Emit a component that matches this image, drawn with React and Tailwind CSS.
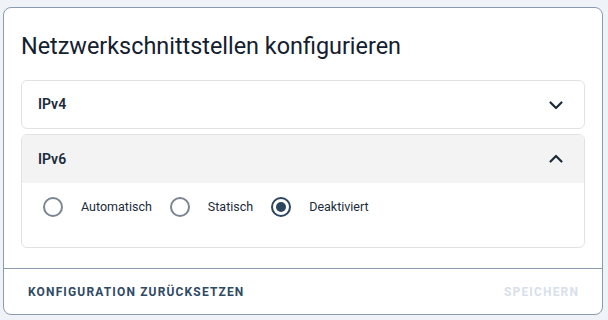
import React from "react";

function Chevron({ up }) {
  return (
    <svg width="24" height="24" viewBox="0 0 24 24" fill="none" stroke="#1c2b3a" strokeWidth="2.2" strokeLinecap="round" strokeLinejoin="round">
      {up ? <path d="M6.5 14.5l5.5-5.5 5.5 5.5" /> : <path d="M6.5 9.5l5.5 5.5 5.5-5.5" />}
    </svg>
  );
}

function Radio({ checked, label }) {
  return (
    <label className="flex items-center">
      <span className={`flex items-center justify-center w-[20px] h-[20px] rounded-full border-2 ${checked ? "border-[#2c4560]" : "border-[#7b8591]"}`}>
        {checked && <span className="w-[10px] h-[10px] rounded-full bg-[#2c4560]" />}
      </span>
      <span className="ml-[18px] text-[12.5px] text-[#1c2b3a]">{label}</span>
    </label>
  );
}

export default function App() {
  return (
    <div className="w-[608px] h-[320px] bg-[#eff2f6] pt-[7px] pl-[3px]" style={{ fontFamily: "Roboto, 'Liberation Sans', sans-serif" }}>
      <div className="w-[600px] h-[308px] bg-white border border-[#8a9bb0] rounded-[8px] flex flex-col">
        <div className="px-[17px] pt-[24px] flex-1">
          <h1 className="text-[23.4px] leading-[28px] text-[#14202e] font-normal">Netzwerkschnittstellen konfigurieren</h1>
          <div className="mt-[20px] flex flex-col gap-[5px]">
            <div className="h-[49px] border border-[#e2e2e2] rounded-[6px] flex items-center justify-between px-[16px]">
              <span className="text-[14px] font-semibold text-[#1c2b3a]">IPv4</span>
              <span className="flex"><Chevron /></span>
            </div>
            <div className="border border-[#e2e2e2] rounded-[6px] overflow-hidden">
              <div className="h-[48px] bg-[#f3f3f3] flex items-center justify-between px-[16px]">
                <span className="text-[14px] font-semibold text-[#1c2b3a]">IPv6</span>
                <span className="flex"><Chevron up /></span>
              </div>
              <div className="h-[64px] flex items-start pt-[14px] pl-[21px] gap-[18px]">
                <Radio label="Automatisch" />
                <Radio label="Statisch" />
                <Radio checked label="Deaktiviert" />
              </div>
            </div>
          </div>
        </div>
        <div className="h-[46px] border-t border-[#8a9bb0] flex items-center justify-between pl-[24px] pr-[23px]">
          <span className="text-[12px] font-bold tracking-[1.15px] text-[#2f4a63]">KONFIGURATION ZURÜCKSETZEN</span>
          <span className="text-[12px] font-bold tracking-[1.15px] text-[#d8e0ea]">SPEICHERN</span>
        </div>
      </div>
    </div>
  );
}
